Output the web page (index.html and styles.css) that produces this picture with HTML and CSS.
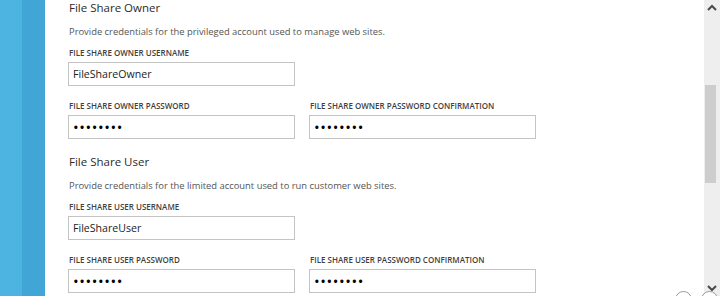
FILE: index.html
```html
<!DOCTYPE html>
<html>
<head>
<meta charset="utf-8">
<link rel="stylesheet" href="styles.css">
</head>
<body>
<div class="page">
  <div class="rail rail-light"></div>
  <div class="rail rail-dark"></div>
  <main class="main">
    <section class="section">
      <h2 class="heading">File Share Owner</h2>
      <p class="desc">Provide credentials for the privileged account used to manage web sites.</p>
      <div class="row">
        <div class="field">
          <label class="label">FILE SHARE OWNER USERNAME</label>
          <div class="input">FileShareOwner</div>
        </div>
      </div>
      <div class="row">
        <div class="field">
          <label class="label">FILE SHARE OWNER PASSWORD</label>
          <div class="input dots">••••••••</div>
        </div>
        <div class="field">
          <label class="label">FILE SHARE OWNER PASSWORD CONFIRMATION</label>
          <div class="input dots">••••••••</div>
        </div>
      </div>
    </section>
    <section class="section">
      <h2 class="heading">File Share User</h2>
      <p class="desc">Provide credentials for the limited account used to run customer web sites.</p>
      <div class="row">
        <div class="field">
          <label class="label">FILE SHARE USER USERNAME</label>
          <div class="input">FileShareUser</div>
        </div>
      </div>
      <div class="row">
        <div class="field">
          <label class="label">FILE SHARE USER PASSWORD</label>
          <div class="input dots">••••••••</div>
        </div>
        <div class="field">
          <label class="label">FILE SHARE USER PASSWORD CONFIRMATION</label>
          <div class="input dots">••••••••</div>
        </div>
      </div>
    </section>
  </main>
  <div class="scrollbar">
    <svg class="arrow" width="10" height="8" viewBox="0 0 10 8"><path d="M1 6 L5 2 L9 6" fill="none" stroke="#4a4a4a" stroke-width="2"/></svg>
    <div class="track">
      <div class="thumb"></div>
    </div>
    <svg class="arrow" width="10" height="8" viewBox="0 0 10 8"><path d="M1 2 L5 6 L9 2" fill="none" stroke="#4a4a4a" stroke-width="2"/></svg>
  </div>
  <div class="circles">
    <span class="circle"></span>
    <span class="circle"></span>
  </div>
</div>
</body>
</html>
```

FILE: styles.css
```css
html, body {
  margin: 0;
  padding: 0;
  background: #ffffff;
}
.page {
  position: relative;
  display: flex;
  width: 720px;
  height: 296px;
  overflow: hidden;
  font-family: "Open Sans", "Noto Sans", sans-serif;
  color: #333;
}
.rail { flex: none; }
.rail-light { width: 22px; background: #4db4e1; }
.rail-dark { width: 23px; background: #41a6d5; }
.main {
  flex: 1;
  padding-left: 23px;
  display: flex;
  flex-direction: column;
}
.section {
  display: flex;
  flex-direction: column;
  margin-bottom: 15px;
}
.heading {
  margin: 0;
  font-size: 11.5px;
  font-weight: 400;
  line-height: 16px;
  color: #2b2b2b;
  padding-left: 1px;
}
.desc {
  margin: 8px 0 0;
  font-size: 9.4px;
  line-height: 16px;
  color: #555;
  padding-left: 1px;
}
.row {
  display: flex;
  gap: 14px;
  margin-top: 7px;
}
.row + .row { margin-top: 14px; }
.field {
  display: flex;
  flex-direction: column;
  gap: 3px;
}
.label {
  font-size: 8px;
  font-weight: 600;
  line-height: 12px;
  color: #3f3f3f;
  padding-left: 1px;
  white-space: nowrap;
}
.input {
  box-sizing: border-box;
  width: 227px;
  height: 24px;
  border: 1px solid #c4c4c4;
  padding: 0 4px;
  font-size: 10.6px;
  line-height: 22px;
  color: #222;
}
.dots {
  font-size: 15px;
  letter-spacing: 0.6px;
  color: #000;
}
.scrollbar {
  flex: none;
  width: 16px;
  background: #eeeeee;
  display: flex;
  flex-direction: column;
  align-items: center;
}
.arrow {
  flex: none;
  margin: 4px 0;
}
.track {
  flex: 1;
  width: 100%;
  position: relative;
}
.thumb {
  margin: 69px 0 0 1px;
  width: 11px;
  height: 98px;
  background: #cdcdcd;
}
.circles {
  position: absolute;
  right: 2px;
  top: 291px;
  display: flex;
  gap: 9px;
}
.circle {
  width: 15px;
  height: 15px;
  border: 1px solid #9a9a9a;
  border-radius: 50%;
  background: #fff;
}
```
